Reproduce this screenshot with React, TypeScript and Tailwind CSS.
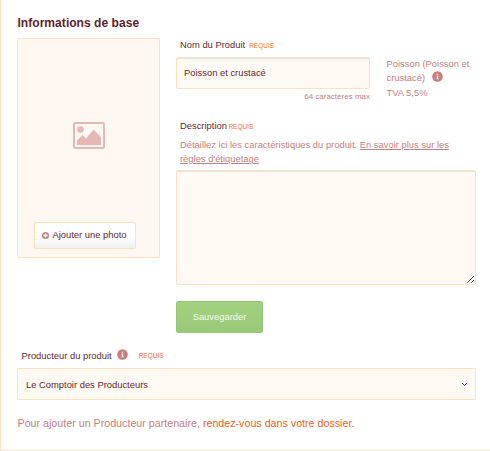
import React, { useState } from "react";

const Required = ({ className = "" }: { className?: string }) => (
  <span className={`text-[6.5px] text-[#ff6a28] ${className}`}>REQUIS</span>
);

const InfoIcon = ({ className = "" }: { className?: string }) => (
  <svg viewBox="0 0 12 12" className={`h-[11px] w-[11px] shrink-0 ${className}`}>
    <circle cx="6" cy="6" r="5.8" fill="#c97d7d" />
    <path d="M5 5h1.8v3.2h.6v.9H4.8v-.9h.5V5.9H5zM5.2 2.9h1.5v1.3H5.2z" fill="#fbeeee" />
  </svg>
);

const PictureIcon = () => (
  <svg viewBox="0 0 32 27" className="h-[27px] w-8">
    <rect x="1" y="1" width="30" height="25" rx="1.5" fill="none" stroke="#e5b8b5" strokeWidth="2" />
    <circle cx="7.5" cy="7.5" r="3.3" fill="#e5b8b5" />
    <path d="M4 23v-4.5l5.5-5.5 3.5 3.5 7.5-9 7.5 7.500v8z" fill="#e5b8b5" />
  </svg>
);

const PlusIcon = () => (
  <svg viewBox="0 0 8 8" className="h-[7px] w-[7px]">
    <circle cx="4" cy="4" r="4" fill="#c97d7d" />
    <path d="M3.2 1.6h1.6v1.6h1.6v1.6H4.8v1.6H3.2V4.8H1.6V3.2h1.6z" fill="#fff" />
  </svg>
);

const App = () => {
  const [name, setName] = useState("Poisson et crustacé");
  const [description, setDescription] = useState("");

  return (
    <div className="h-[451px] w-[490px] overflow-hidden border-b border-l border-[#ffe0c0] bg-white pl-4 pr-[14px] pt-[15px] font-['Liberation_Sans',Arial,sans-serif] text-[9.4px] text-[#5f1f30]">
      <h2 className="h-[23px] pl-[0.5px] text-[12.1px] font-bold leading-4">Informations de base</h2>

      <div className="flex gap-4">
        {/* Photo */}
        <div className="flex h-[220px] w-[143px] shrink-0 flex-col rounded-xs border border-[#ffe0c0] bg-[#fff7f2] pb-2 pl-4 pr-[23px]">
          <div className="flex h-[183px] items-center justify-center pl-[7px] pt-[9px]">
            <PictureIcon />
          </div>
          <button className="flex h-[27px] w-[102px] items-center gap-1 rounded-xs border border-[#ffe0b8] bg-linear-to-b from-white from-50% to-[#f0f0f0] pl-[6.5px] whitespace-nowrap">
            <PlusIcon />
            <span>Ajouter une photo</span>
          </button>
        </div>

        {/* Product details */}
        <div className="w-[300px]">
          <div className="flex justify-between">
            <div className="w-[194px]">
              <label className="flex h-[19px] items-baseline gap-1 pl-1 leading-[14px]">
                Nom du Produit <Required />
              </label>
              <input
                value={name}
                onChange={(e) => setName(e.target.value)}
                className="block h-8 w-full rounded-xs border border-[#fde0bf] bg-[#fff9f3] px-[7px] pb-0.5 shadow-[inset_0_1px_1px_#e6dfe3] outline-none"
              />
              <p className="text-right text-[8px] leading-[15px] text-[#c97d7d]">64 caractères max</p>
            </div>
            <div className="w-[89.5px] pt-[19px] leading-[14px] text-[#c97d7d]">
              <p className="whitespace-nowrap">Poisson (Poisson et</p>
              <p className="flex items-center gap-[7px]">
                crustacé) <InfoIcon className="-mt-[3px]" />
              </p>
              <p className="pt-[1px]">TVA 5,5%</p>
            </div>
          </div>

          <label className="mt-[15px] flex items-baseline gap-[1.5px] pl-1 leading-[14px]">
            Description <Required />
          </label>
          <p className="mt-1 h-8 whitespace-nowrap pl-1 leading-[14px] text-[#c97d7d]">
            Détaillez ici les caractéristiques du produit. <a href="#etiquetage" className="underline">En savoir plus sur les
            <br />
            règles d'étiquetage</a>
          </p>
          <textarea
            value={description}
            onChange={(e) => setDescription(e.target.value)}
            className="block h-[115px] w-full resize rounded-xs border border-[#fde0bf] bg-[#fff9f3] shadow-[inset_0_1px_1px_#e6dfe3] outline-none"
          />
          <button className="mt-4 h-8 w-[87px] rounded-xs border border-[#93c774] bg-linear-to-b from-[#a3d180] to-[#98ca78] text-[#f0faeb]">
            Sauvegarder
          </button>
        </div>
      </div>

      {/* Producer */}
      <div className="mt-4 flex h-[19px] items-start pl-[4.5px] leading-[14px]">
        <span>Producteur du produit</span>
        <InfoIcon className="ml-[5px]" />
        <Required className="ml-[11px]" />
      </div>
      <button className="flex h-8 w-full items-center justify-between rounded-xs border border-[#fde0bf] bg-[#fff9f3] pl-2 pr-[7px]">
        <span className="pt-0.5">Le Comptoir des Producteurs</span>
        <svg viewBox="0 0 7 5" className="h-[5px] w-[7px]">
          <path d="M1 1l2.5 2.5L6 1" fill="none" stroke="#5f1f30" strokeWidth="0.9" />
        </svg>
      </button>
      <p className="mt-[15px] whitespace-nowrap pl-[0.5px] text-[10.7px] leading-4 text-[#c97d7d]">
        Pour ajouter un Producteur partenaire, <a href="#dossier" className="text-[#ff5a14]">rendez-vous dans votre dossier.</a>
      </p>
    </div>
  );
};

export default App;
